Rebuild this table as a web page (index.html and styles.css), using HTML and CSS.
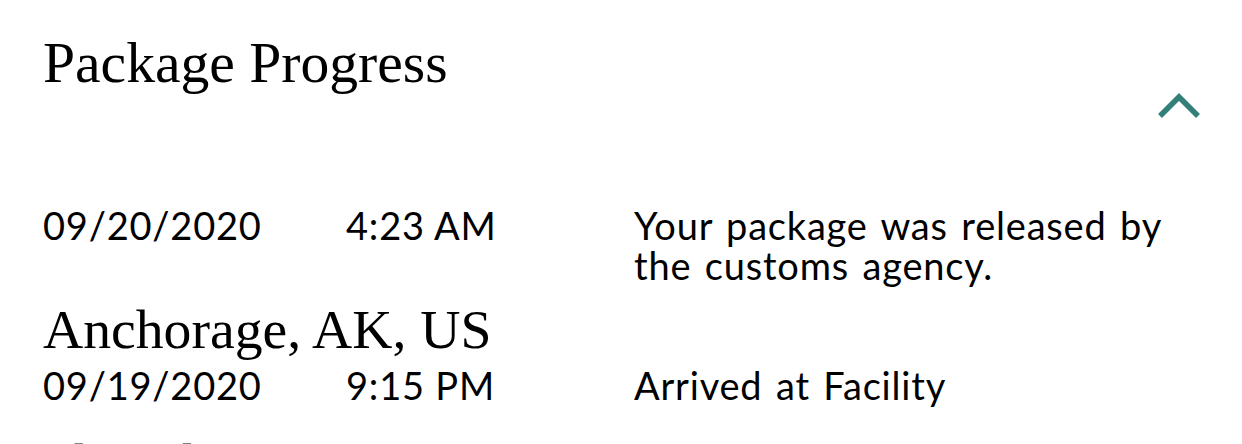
FILE: index.html
```html
<!doctype html>
<html>

<head>
    <title>Package Progress</title>
    <link rel="stylesheet" href="styles.css">
</head>

<body>
    <div class="progress">
        <div class="progress-head">
            <h1>Package Progress</h1>
            <button class="toggle" type="button" aria-label="Collapse">
                <svg width="46" height="28" viewBox="0 0 46 28">
                    <polyline points="4,24 23,5 42,24" fill="none" stroke="#33807a" stroke-width="5.5" />
                </svg>
            </button>
        </div>

        <div class="stop">
            <div class="event">
                <span class="date">09/20/2020</span>
                <span class="time">4:23 AM</span>
                <span class="desc">Your package was released by the customs agency.</span>
            </div>
        </div>

        <div class="stop">
            <h2 class="location">Anchorage, AK, US</h2>
            <div class="event">
                <span class="date">09/19/2020</span>
                <span class="time">9:15 PM</span>
                <span class="desc">Arrived at Facility</span>
            </div>
        </div>

        <div class="stop">
            <h2 class="location">Shanghai, CN</h2>
            <div class="event">
                <span class="date">09/19/2020</span>
                <span class="time">2:40 AM</span>
                <span class="desc">Departed from Facility</span>
            </div>
        </div>
    </div>
</body>

</html>
```

FILE: styles.css
```css
body {
    margin: 0;
    background: #fff;
    color: #000;
    font-family: Lato, "Open Sans", sans-serif;
}

.progress {
    padding: 34px 40px 0 43px;
}

.progress-head {
    display: flex;
    justify-content: space-between;
    align-items: flex-start;
}

h1 {
    margin: 0;
    font-family: "Liberation Serif", serif;
    font-weight: normal;
    font-size: 57.6px;
    line-height: 57px;
}

.toggle {
    margin-top: 58px;
    padding: 0;
    border: none;
    background: none;
    cursor: pointer;
}

.toggle svg {
    display: block;
}

.stop {
    margin-top: 85px;
}

.stop + .stop {
    margin-top: 17px;
}

.stop + .stop + .stop {
    margin-top: 31px;
}

.location {
    margin: 0 0 8px 0;
    font-family: "Liberation Serif", serif;
    font-weight: normal;
    font-size: 55.7px;
    line-height: 55px;
}

.event {
    display: grid;
    grid-template-columns: 303px 288px 1fr;
    font-size: 38px;
    line-height: 40px;
    letter-spacing: 0.8px;
}

.desc {
    max-width: 566px;
    word-spacing: 3px;
}
```
